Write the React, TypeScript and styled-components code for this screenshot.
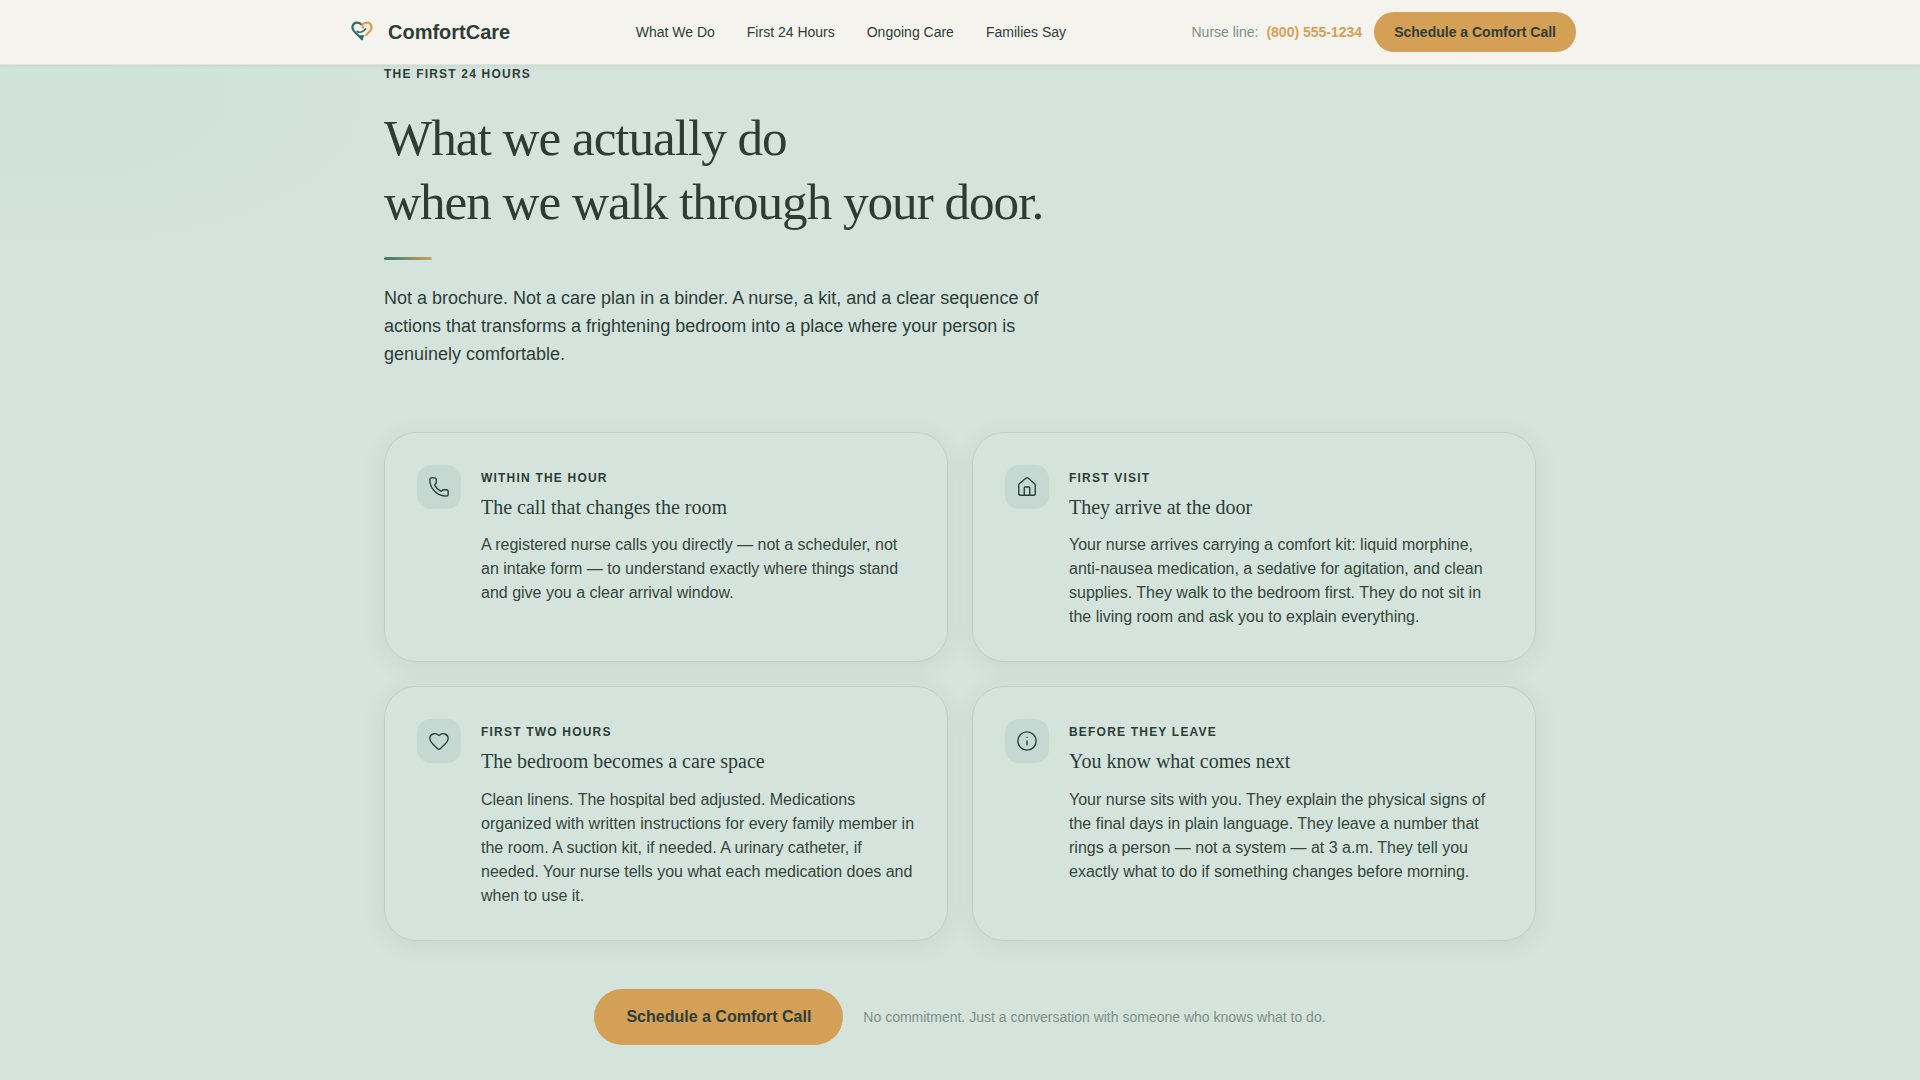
import React from "react";
import styled, { createGlobalStyle } from "styled-components";
import { Phone, House, Heart, Info } from "lucide-react";

const Global = createGlobalStyle`
  html, body { margin: 0; padding: 0; background: #d4e4dd; }
  body { font-family: "Liberation Sans", Arial, sans-serif; color: #2d3d36; height: 1080px; overflow: hidden; }
  * { box-sizing: border-box; }
`;

const Page = styled.div`
  height: 1080px;
  background:
    radial-gradient(ellipse 420px 200px at 60px 100px, rgba(190, 215, 205, 0.18), transparent),
    #d4e4dd;
`;
const Nav = styled.header`
  height: 65px;
  background: #f5f3ee;
  border-bottom: 1px solid #e2e5de;
  box-shadow: 0 1px 3px rgba(45, 61, 54, 0.08);
  position: relative;
`;
const NavInner = styled.div`
  max-width: 1280px;
  height: 64px;
  margin: 0 auto;
  padding: 0 24px;
  display: flex;
  align-items: center;
  justify-content: space-between;
`;
const Brand = styled.div`
  display: flex;
  align-items: center;
  gap: 12px;
  font-size: 20px;
  font-weight: 700;
  color: #2d3d36;
`;
const Links = styled.nav`
  display: flex;
  gap: 32px;
`;
const NavLink = styled.a`
  font-size: 14px;
  color: #2d3d36;
`;
const NavRight = styled.div`
  display: flex;
  align-items: center;
  gap: 12px;
`;
const NurseLine = styled.span`
  font-size: 14px;
  color: #7d8f87;
`;
const NurseNumber = styled.span`
  font-weight: 600;
  color: #d4a056;
  margin-left: 8px;
`;
const SmallCta = styled.a`
  display: flex;
  align-items: center;
  height: 40px;
  padding: 0 20px;
  border-radius: 20px;
  background: #d4a056;
  color: #2d3d36;
  font-size: 14px;
  font-weight: 700;
`;
const Main = styled.main`
  width: 1152px;
  margin: 0 auto;
  padding-top: 1px;
`;
const Eyebrow = styled.div`
  font-size: 12px;
  line-height: 16px;
  font-weight: 700;
  letter-spacing: 0.1em;
  color: #2d3d36;
`;
const Title = styled.h2`
  margin: 24px 0 0;
  font-family: "Liberation Serif", "Times New Roman", serif;
  font-weight: 400;
  font-size: 51.2px;
  line-height: 64px;
  letter-spacing: -0.02em;
  color: #2d3d36;
`;
const Rule = styled.div`
  width: 48px;
  height: 3px;
  margin-top: 23px;
  border-radius: 2px;
  background: linear-gradient(90deg, #2f7d6b, #d4a056);
`;
const Lead = styled.p`
  margin: 24px 0 0;
  width: 672px;
  font-size: 18px;
  line-height: 28px;
  color: #2d3d36;
`;
const Grid = styled.div`
  display: grid;
  grid-template-columns: 1fr 1fr;
  gap: 24px;
  margin-top: 64px;
`;
const Card = styled.article`
  display: flex;
  gap: 20px;
  padding: 32px;
  border: 1px solid #bcd0c8;
  border-radius: 32px;
  box-shadow: 0 4px 24px rgba(45, 61, 54, 0.08);
`;
const IconBox = styled.div`
  flex: none;
  width: 44px;
  height: 44px;
  border-radius: 14px;
  background: #c5d9d2;
  color: #2d3d36;
  display: flex;
  align-items: center;
  justify-content: center;
`;
const CardBody = styled.div`
  flex: 1;
  min-width: 0;
`;
const Label = styled.div`
  margin-top: 4px;
  font-size: 12px;
  line-height: 18px;
  font-weight: 700;
  letter-spacing: 0.1em;
  color: #2d3d36;
`;
const CardTitle = styled.h3`
  margin: 6px 0 0;
  font-family: "Liberation Serif", "Times New Roman", serif;
  font-weight: 400;
  font-size: 20px;
  line-height: 28px;
  color: #2d3d36;
`;
const CardText = styled.p`
  margin: 12.4px 0 0;
  font-size: 16px;
  line-height: 24px;
  color: #354539;
`;
const CtaRow = styled.div`
  display: flex;
  align-items: center;
  justify-content: center;
  gap: 20px;
  margin-top: 48px;
`;
const BigCta = styled.a`
  display: flex;
  align-items: center;
  height: 56px;
  padding: 0 32px;
  border-radius: 28px;
  background: #d4a056;
  color: #2d3d36;
  font-size: 16px;
  font-weight: 700;
`;
const CtaNote = styled.span`
  font-size: 14px;
  color: #7d8f87;
`;

const Logo = () => (
  <svg width="32" height="32" viewBox="0 0 32 32" fill="none">
    <g transform="translate(5.4 1.8) scale(1.05)">
      <path d="M12 20.5 L4.2 12.5 C1.6 9.5 3 4.8 7 4.6 C9 4.5 10.8 5.4 12 7" stroke="#2f6f62" strokeWidth="2" strokeLinecap="round" />
      <path d="M12 7 C13.2 5.4 15 4.5 17 4.6 C21 4.8 22.4 9.5 19.8 12.5 L16 16.4" stroke="#d4a056" strokeWidth="2" strokeLinecap="round" />
      <path d="M7.5 13 C10 14.5 12.5 14 15.5 10.5" stroke="#2f6f62" strokeWidth="1.6" strokeLinecap="round" />
      <circle cx="13" cy="9" r="1.3" fill="#d4a056" />
      <path d="M12 21 L9.5 16.5 H14.5 Z" fill="#2f6f62" />
    </g>
  </svg>
);

const cards = [
  { Icon: Phone, label: "WITHIN THE HOUR", title: "The call that changes the room", text: "A registered nurse calls you directly — not a scheduler, not an intake form — to understand exactly where things stand and give you a clear arrival window." },
  { Icon: House, label: "FIRST VISIT", title: "They arrive at the door", text: "Your nurse arrives carrying a comfort kit: liquid morphine, anti-nausea medication, a sedative for agitation, and clean supplies. They walk to the bedroom first. They do not sit in the living room and ask you to explain everything." },
  { Icon: Heart, label: "FIRST TWO HOURS", title: "The bedroom becomes a care space", text: "Clean linens. The hospital bed adjusted. Medications organized with written instructions for every family member in the room. A suction kit, if needed. A urinary catheter, if needed. Your nurse tells you what each medication does and when to use it." },
  { Icon: Info, label: "BEFORE THEY LEAVE", title: "You know what comes next", text: "Your nurse sits with you. They explain the physical signs of the final days in plain language. They leave a number that rings a person — not a system — at 3 a.m. They tell you exactly what to do if something changes before morning." },
];

export default function App() {
  return (
    <Page>
      <Global />
      <Nav>
        <NavInner>
          <Brand>
            <Logo />
            ComfortCare
          </Brand>
          <Links>
            <NavLink>What We Do</NavLink>
            <NavLink>First 24 Hours</NavLink>
            <NavLink>Ongoing Care</NavLink>
            <NavLink>Families Say</NavLink>
          </Links>
          <NavRight>
            <NurseLine>
              Nurse line:<NurseNumber>(800) 555-1234</NurseNumber>
            </NurseLine>
            <SmallCta>Schedule a Comfort Call</SmallCta>
          </NavRight>
        </NavInner>
      </Nav>
      <Main>
        <Eyebrow>THE FIRST 24 HOURS</Eyebrow>
        <Title>
          What we actually do
          <br />
          when we walk through your door.
        </Title>
        <Rule />
        <Lead>
          Not a brochure. Not a care plan in a binder. A nurse, a kit, and a clear sequence of actions that transforms a frightening bedroom into a place where your person is genuinely comfortable.
        </Lead>
        <Grid>
          {cards.map(({ Icon, label, title, text }) => (
            <Card key={label}>
              <IconBox>
                <Icon size={22} strokeWidth={1.5} />
              </IconBox>
              <CardBody>
                <Label>{label}</Label>
                <CardTitle>{title}</CardTitle>
                <CardText>{text}</CardText>
              </CardBody>
            </Card>
          ))}
        </Grid>
        <CtaRow>
          <BigCta>Schedule a Comfort Call</BigCta>
          <CtaNote>No commitment. Just a conversation with someone who knows what to do.</CtaNote>
        </CtaRow>
      </Main>
    </Page>
  );
}
